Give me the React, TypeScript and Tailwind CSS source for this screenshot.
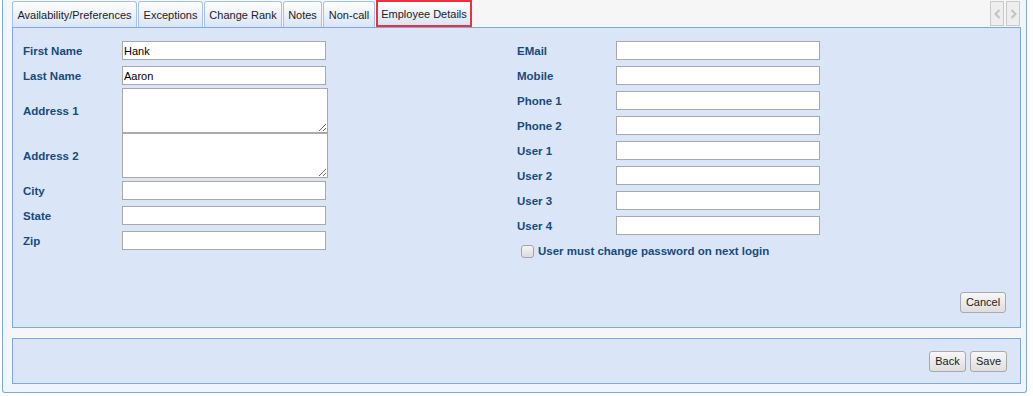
import React from "react";

const labelCls = "w-[99px] shrink-0 text-[11.5px] font-bold text-[#174a7c] leading-[14px]";

function TextInput({ value = "" }: { value?: string }) {
  return (
    <input
      type="text"
      defaultValue={value}
      className="block h-[19px] w-[204px] border border-[#a9a9a9] bg-white px-[1px] text-[11px] leading-[15px] text-black outline-none"
    />
  );
}

function TextArea() {
  return <textarea className="block h-[45px] w-[206px] border border-[#a9a9a9] bg-white px-[1px] text-[11px] text-black outline-none" />;
}

function Row({ label, h, children }: { label: string; h: string; children: React.ReactNode }) {
  return (
    <div className={h}>
      <div className="flex items-center">
        <span className={labelCls}>{label}</span>
        {children}
      </div>
    </div>
  );
}

function Tab({ label, w, active = false }: { label: string; w: string; active?: boolean }) {
  if (active) {
    return (
      <div className={`${w} flex h-[27px] items-center justify-center border-2 border-[#e5343d] bg-gradient-to-b from-[#ffffff] to-[#d9e4f5] pt-[1px] text-[11px] text-[#222]`}>
        {label}
      </div>
    );
  }
  return (
    <div className={`${w} mr-[1px] flex h-[26px] items-center justify-center rounded-t-[3px] border border-b-0 border-[#a6c2e8] bg-gradient-to-b from-[#ffffff] to-[#d9e4f5] pt-[2px] text-[11px] text-[#222]`}>
      {label}
    </div>
  );
}

function ScrollBtn({ dir }: { dir: "left" | "right" }) {
  return (
    <div className="flex h-[25px] w-[14px] items-center justify-center border border-[#c9c9c9] bg-[#eeeeee]">
      <svg width="7" height="10" viewBox="0 0 7 10" fill="none">
        <path
          d={dir === "left" ? "M5.5 1L1.5 5L5.5 9" : "M1.5 1L5.5 5L1.5 9"}
          stroke="#c2c2c2"
          strokeWidth="2"
        />
      </svg>
    </div>
  );
}

function Button({ label, w }: { label: string; w: string }) {
  return (
    <button className={`${w} h-[21px] rounded-[3px] border border-[#a9a9a9] bg-gradient-to-b from-[#f7f7f7] to-[#dedede] text-[11px] leading-[13px] text-[#222]`}>
      {label}
    </button>
  );
}

export default function App() {
  return (
    <div className="h-[396px] w-[1033px] bg-white font-['Liberation_Sans',Arial,sans-serif]">
      <div className="ml-[2px] w-[1025px] rounded-b-[3px] border-x border-b border-[#7fa8dc] bg-[#eef5fe] px-[4px] pb-[8px]">
        <div className="bg-[#f6f6f6] pl-[5px] pr-[1px]">
          <div className="flex h-[27px] items-end">
            <Tab label="Availability/Preferences" w="w-[125px]" />
            <Tab label="Exceptions" w="w-[65px]" />
            <Tab label="Change Rank" w="w-[78px]" />
            <Tab label="Notes" w="w-[39px]" />
            <Tab label="Non-call" w="w-[52px]" />
            <Tab label="Employee Details" w="w-[96px]" active />
            <div className="ml-auto mr-[1px] flex gap-[2px] self-start pt-[1px]">
              <ScrollBtn dir="left" />
              <ScrollBtn dir="right" />
            </div>
          </div>

          <div className="flex h-[301px] flex-col border border-[#7fa8dc] bg-[#dae6f8]">
            <div className="flex pl-[10px] pt-[13px]">
              <div className="w-[494px]">
                <Row label="First Name" h="h-[25px]"><TextInput value="Hank" /></Row>
                <Row label="Last Name" h="h-[22px]"><TextInput value="Aaron" /></Row>
                <Row label="Address 1" h="h-[45px]"><TextArea /></Row>
                <Row label="Address 2" h="h-[48px]"><TextArea /></Row>
                <Row label="City" h="h-[25px]"><TextInput /></Row>
                <Row label="State" h="h-[25px]"><TextInput /></Row>
                <Row label="Zip" h="h-[25px]"><TextInput /></Row>
              </div>
              <div>
                <Row label="EMail" h="h-[25px]"><TextInput /></Row>
                <Row label="Mobile" h="h-[25px]"><TextInput /></Row>
                <Row label="Phone 1" h="h-[25px]"><TextInput /></Row>
                <Row label="Phone 2" h="h-[25px]"><TextInput /></Row>
                <Row label="User 1" h="h-[25px]"><TextInput /></Row>
                <Row label="User 2" h="h-[25px]"><TextInput /></Row>
                <Row label="User 3" h="h-[25px]"><TextInput /></Row>
                <Row label="User 4" h="h-[25px]"><TextInput /></Row>
                <div className="flex items-center gap-[4px] pl-[4px] pt-[3px]">
                  <span className="h-[13px] w-[13px] rounded-[3px] border border-[#a4a4a4] bg-gradient-to-b from-[#f4f4f4] to-[#dcdcdc]" />
                  <span className="text-[11.5px] font-bold leading-[14px] text-[#174a7c]">
                    User must change password on next login
                  </span>
                </div>
              </div>
            </div>
            <div className="mt-auto flex justify-end pb-[14px] pr-[14px]">
              <Button label="Cancel" w="w-[46px]" />
            </div>
          </div>

          <div className="h-[10px]" />

          <div className="flex h-[46px] items-center justify-end gap-[4px] border border-[#7fa8dc] bg-[#dae6f8] pr-[13px]">
            <Button label="Back" w="w-[37px]" />
            <Button label="Save" w="w-[37px]" />
          </div>
        </div>
      </div>
    </div>
  );
}
